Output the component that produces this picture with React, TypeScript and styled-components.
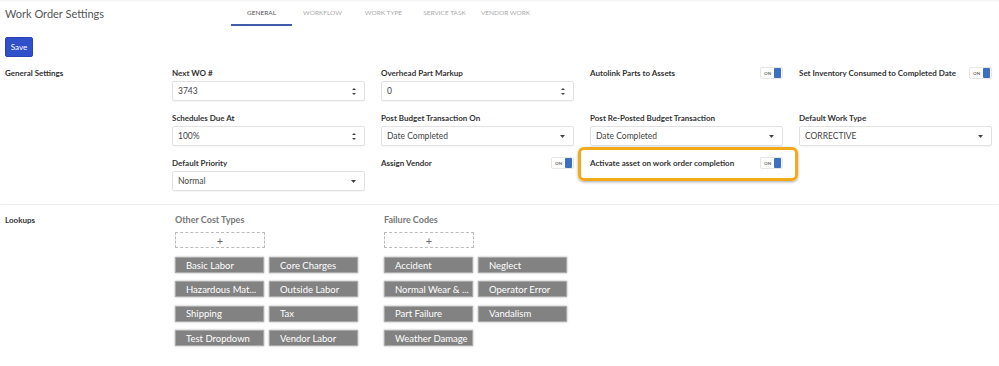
import * as React from 'react';
import styled, { createGlobalStyle } from 'styled-components';

const GlobalStyle = createGlobalStyle`
    body {
        margin: 0;
        background: #fff;
        font-family: Lato, 'Open Sans', sans-serif;
        color: #333;
    }
`;

const Page = styled.div`
    width: 999px;
    height: 366px;
    overflow: hidden;
    box-shadow: inset 0 2px 3px -2px rgba(0, 0, 0, 0.12);
`;

const Inner = styled.div`
    padding: 0 8px 0 5px;
`;

const Header = styled.div`
    display: flex;
    align-items: center;
    height: 26px;
`;

const Title = styled.div`
    width: 226px;
    font-size: 11px;
    color: #555;
`;

const Tabs = styled.div`
    display: flex;
    height: 26px;
`;

interface ITab {
    active?: boolean;
}

const Tab = styled.div<ITab>`
    box-sizing: border-box;
    width: 61px;
    height: 26px;
    display: flex;
    align-items: center;
    justify-content: center;
    font-size: 6.5px;
    text-transform: uppercase;
    color: ${(props) => (props.active ? '#555' : '#aaa')};
    border-bottom: 2px solid ${(props) => (props.active ? '#3f5ba9' : 'transparent')};
`;

const Toolbar = styled.div`
    padding-top: 11px;
`;

const SaveButton = styled.button`
    display: block;
    width: 28px;
    height: 20px;
    padding: 0;
    border: 1px solid #2a43b0;
    border-radius: 2px;
    background: #2f4fcb;
    color: #fff;
    font-family: Lato, sans-serif;
    font-size: 8px;
`;

const Grid = styled.div`
    display: grid;
    grid-template-columns: 151px repeat(4, 193px);
    column-gap: 16px;
`;

const SettingsGrid = styled(Grid)`
    margin-top: 10px;
    row-gap: 11px;
`;

const SectionLabel = styled.div`
    font-size: 8px;
    font-weight: 700;
    line-height: 12px;
    color: #333;
`;

const FieldLabel = styled.div`
    font-size: 8px;
    font-weight: 700;
    line-height: 12px;
    color: #333;
    white-space: nowrap;
`;

const Control = styled.div`
    box-sizing: border-box;
    margin-top: 2px;
    height: 20px;
    display: flex;
    align-items: center;
    justify-content: space-between;
    padding: 0 8px 0 5px;
    border: 1px solid #e2e2e2;
    border-radius: 2px;
    box-shadow: 0 1px 1px rgba(0, 0, 0, 0.04);
    font-size: 8.5px;
    color: #444;
`;

const ToggleRow = styled.div`
    position: relative;
    display: flex;
    align-items: center;
    justify-content: space-between;
    height: 12px;
`;

const Highlighted = styled(ToggleRow)`
    &::after {
        content: '';
        position: absolute;
        top: -10px;
        bottom: -12px;
        left: -12px;
        right: -15px;
        border: 3px solid #f2a91b;
        border-radius: 6px;
        box-shadow: 0 1px 3px rgba(0, 0, 0, 0.35);
        pointer-events: none;
    }
`;

const ToggleBox = styled.div`
    box-sizing: border-box;
    width: 23px;
    height: 12px;
    display: flex;
    align-items: center;
    justify-content: space-between;
    padding: 1px 1px 1px 3px;
    border: 1px solid #e6e6e6;
    border-radius: 2px;
    background: #fff;
`;

const ToggleText = styled.span`
    font-size: 4.5px;
    font-weight: 700;
    color: #666;
`;

const ToggleKnob = styled.span`
    width: 7px;
    height: 10px;
    background: #3a6fc2;
    border-radius: 1px;
`;

const Divider = styled.div`
    margin-top: 13px;
    border-top: 1px solid #eee;
`;

const LookupsGrid = styled(Grid)`
    margin-top: 9px;
`;

const Group = styled.div`
    padding-left: 3px;
`;

const GroupTitle = styled.div`
    font-size: 9px;
    font-weight: 700;
    line-height: 12px;
    color: #777;
`;

const AddBox = styled.div`
    box-sizing: border-box;
    margin-top: 6px;
    width: 90px;
    height: 16px;
    display: flex;
    align-items: center;
    justify-content: center;
    border: 1px dashed #bbb;
    color: #666;
    font-size: 11px;
`;

const TagGrid = styled.div`
    margin-top: 9px;
    display: grid;
    grid-template-columns: 89px 89px;
    column-gap: 5px;
    row-gap: 8.4px;
`;

const Tag = styled.div`
    box-sizing: border-box;
    height: 16px;
    display: flex;
    align-items: center;
    padding-left: 10px;
    background: #828282;
    border: 1px solid #a9a9a9;
    box-shadow: 0 0 2px rgba(0, 0, 0, 0.35);
    color: #fff;
    font-size: 9.5px;
    white-space: nowrap;
    overflow: hidden;
`;

const Spinner = () => (
    <svg width="4" height="9" viewBox="0 0 4 9">
        <path d="M0 3 L2 1 L4 3 Z" fill="#444" />
        <path d="M0 6 L4 6 L2 8 Z" fill="#444" />
    </svg>
);

const Caret = () => (
    <svg width="5" height="3" viewBox="0 0 5 3">
        <path d="M0 0 L5 0 L2.5 3 Z" fill="#444" />
    </svg>
);

const Toggle = () => (
    <ToggleBox>
        <ToggleText>ON</ToggleText>
        <ToggleKnob />
    </ToggleBox>
);

interface IField {
    label: string;
    value: string;
    kind: 'number' | 'select';
}

const Field: React.FC<IField> = ({ label, value, kind }): JSX.Element => {
    return (
        <div>
            <FieldLabel>{label}</FieldLabel>
            <Control>
                <span>{value}</span>
                {kind === 'number' ? <Spinner /> : <Caret />}
            </Control>
        </div>
    );
};

const App: React.FC = (): JSX.Element => {
    const tabs = ['General', 'Workflow', 'Work Type', 'Service Task', 'Vendor Work'];
    const costTypes = [
        'Basic Labor',
        'Core Charges',
        'Hazardous Mat...',
        'Outside Labor',
        'Shipping',
        'Tax',
        'Test Dropdown',
        'Vendor Labor',
    ];
    const failureCodes = [
        'Accident',
        'Neglect',
        'Normal Wear & ...',
        'Operator Error',
        'Part Failure',
        'Vandalism',
        'Weather Damage',
    ];

    return (
        <Page>
            <GlobalStyle />
            <Inner>
                <Header>
                    <Title>Work Order Settings</Title>
                    <Tabs>
                        {tabs.map((tab, i) => {
                            return (
                                <Tab key={tab} active={i === 0}>
                                    {tab}
                                </Tab>
                            );
                        })}
                    </Tabs>
                </Header>

                <Toolbar>
                    <SaveButton>Save</SaveButton>
                </Toolbar>

                <SettingsGrid>
                    <SectionLabel>General Settings</SectionLabel>
                    <Field label="Next WO #" value="3743" kind="number" />
                    <Field label="Overhead Part Markup" value="0" kind="number" />
                    <ToggleRow>
                        <FieldLabel>Autolink Parts to Assets</FieldLabel>
                        <Toggle />
                    </ToggleRow>
                    <ToggleRow>
                        <FieldLabel>Set Inventory Consumed to Completed Date</FieldLabel>
                        <Toggle />
                    </ToggleRow>

                    <div />
                    <Field label="Schedules Due At" value="100%" kind="number" />
                    <Field label="Post Budget Transaction On" value="Date Completed" kind="select" />
                    <Field label="Post Re-Posted Budget Transaction" value="Date Completed" kind="select" />
                    <Field label="Default Work Type" value="CORRECTIVE" kind="select" />

                    <div />
                    <Field label="Default Priority" value="Normal" kind="select" />
                    <ToggleRow>
                        <FieldLabel>Assign Vendor</FieldLabel>
                        <Toggle />
                    </ToggleRow>
                    <Highlighted>
                        <FieldLabel>Activate asset on work order completion</FieldLabel>
                        <Toggle />
                    </Highlighted>
                    <div />
                </SettingsGrid>
            </Inner>

            <Divider />

            <Inner>
                <LookupsGrid>
                    <SectionLabel>Lookups</SectionLabel>
                    <Group>
                        <GroupTitle>Other Cost Types</GroupTitle>
                        <AddBox>+</AddBox>
                        <TagGrid>
                            {costTypes.map((tag) => {
                                return <Tag key={tag}>{tag}</Tag>;
                            })}
                        </TagGrid>
                    </Group>
                    <Group>
                        <GroupTitle>Failure Codes</GroupTitle>
                        <AddBox>+</AddBox>
                        <TagGrid>
                            {failureCodes.map((tag) => {
                                return <Tag key={tag}>{tag}</Tag>;
                            })}
                        </TagGrid>
                    </Group>
                </LookupsGrid>
            </Inner>
        </Page>
    );
};

export default App;
